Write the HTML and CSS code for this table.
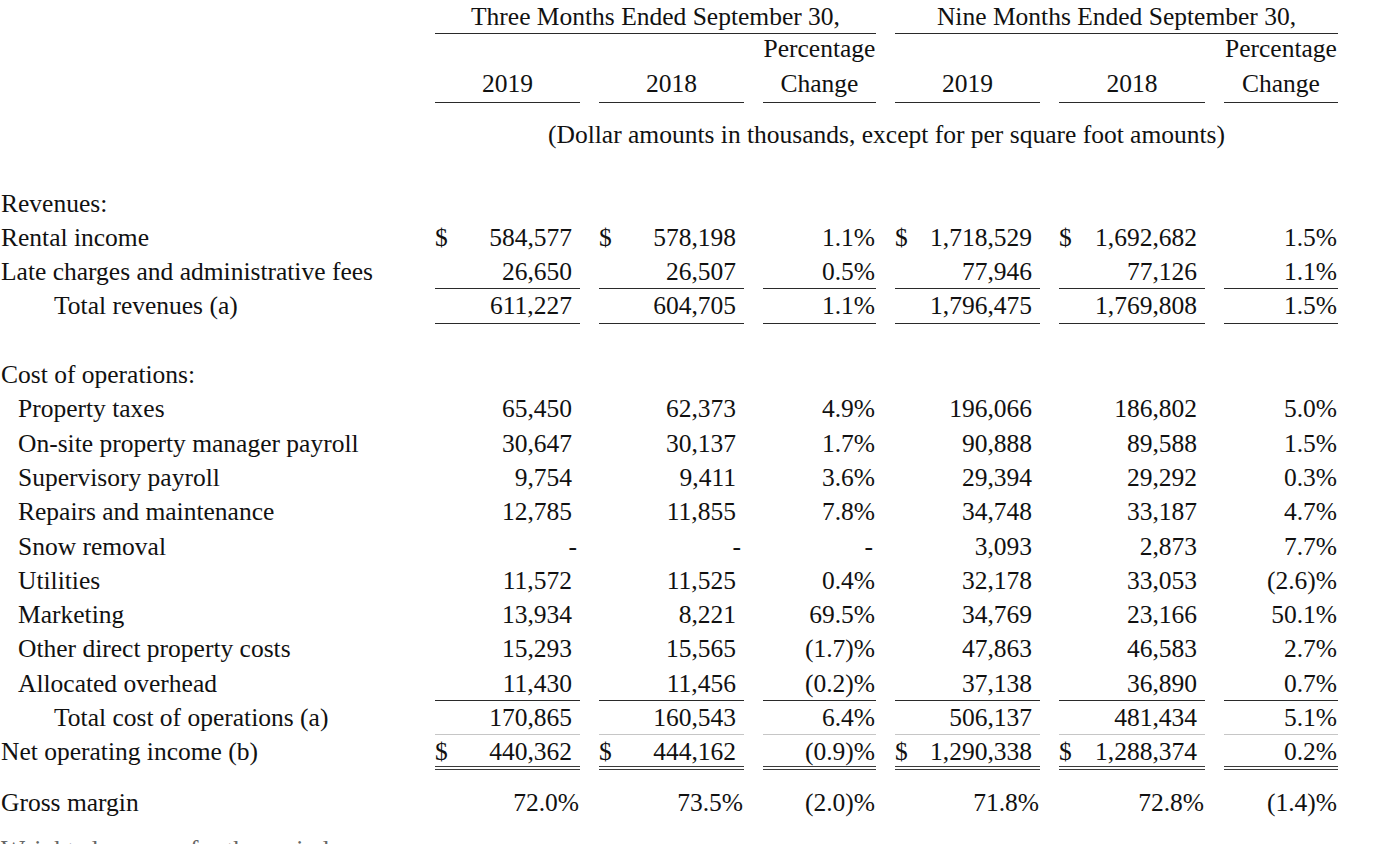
FILE: index.html
```html
<!DOCTYPE html>
<html lang="en">
<head>
<meta charset="utf-8">
<title>Same store operating results</title>
<link rel="stylesheet" href="styles.css">
</head>
<body>
<div class="report">
  <div class="row head-group">
    <div></div>
    <div class="grp">Three Months Ended September 30,</div>
    <div class="grp">Nine Months Ended September 30,</div>
  </div>
  <div class="row head-cols">
    <div></div>
    <div class="hc">2019</div>
    <div class="hc">2018</div>
    <div class="hc">Percentage<br>Change</div>
    <div class="hc">2019</div>
    <div class="hc">2018</div>
    <div class="hc">Percentage<br>Change</div>
  </div>
  <div class="row note">
    <div></div>
    <div class="note-text">(Dollar amounts in thousands, except for per square foot amounts)</div>
  </div>
  <div class="row blank"></div>

  <div class="row"><div class="lbl">Revenues:</div></div>
  <div class="row">
    <div class="lbl">Rental income</div>
    <div class="num"><span>$</span><span>584,577</span></div>
    <div class="num"><span>$</span><span>578,198</span></div>
    <div class="pct">1.1%</div>
    <div class="num"><span>$</span><span>1,718,529</span></div>
    <div class="num"><span>$</span><span>1,692,682</span></div>
    <div class="pct">1.5%</div>
  </div>
  <div class="row">
    <div class="lbl">Late charges and administrative fees</div>
    <div class="num ul"><span></span><span>26,650</span></div>
    <div class="num ul"><span></span><span>26,507</span></div>
    <div class="pct ul">0.5%</div>
    <div class="num ul"><span></span><span>77,946</span></div>
    <div class="num ul"><span></span><span>77,126</span></div>
    <div class="pct ul">1.1%</div>
  </div>
  <div class="row">
    <div class="lbl ind2">Total revenues (a)</div>
    <div class="num ul"><span></span><span>611,227</span></div>
    <div class="num ul"><span></span><span>604,705</span></div>
    <div class="pct ul">1.1%</div>
    <div class="num ul"><span></span><span>1,796,475</span></div>
    <div class="num ul"><span></span><span>1,769,808</span></div>
    <div class="pct ul">1.5%</div>
  </div>
  <div class="row blank"></div>

  <div class="row"><div class="lbl">Cost of operations:</div></div>
  <div class="row">
    <div class="lbl ind1">Property taxes</div>
    <div class="num"><span></span><span>65,450</span></div>
    <div class="num"><span></span><span>62,373</span></div>
    <div class="pct">4.9%</div>
    <div class="num"><span></span><span>196,066</span></div>
    <div class="num"><span></span><span>186,802</span></div>
    <div class="pct">5.0%</div>
  </div>
  <div class="row">
    <div class="lbl ind1">On-site property manager payroll</div>
    <div class="num"><span></span><span>30,647</span></div>
    <div class="num"><span></span><span>30,137</span></div>
    <div class="pct">1.7%</div>
    <div class="num"><span></span><span>90,888</span></div>
    <div class="num"><span></span><span>89,588</span></div>
    <div class="pct">1.5%</div>
  </div>
  <div class="row">
    <div class="lbl ind1">Supervisory payroll</div>
    <div class="num"><span></span><span>9,754</span></div>
    <div class="num"><span></span><span>9,411</span></div>
    <div class="pct">3.6%</div>
    <div class="num"><span></span><span>29,394</span></div>
    <div class="num"><span></span><span>29,292</span></div>
    <div class="pct">0.3%</div>
  </div>
  <div class="row">
    <div class="lbl ind1">Repairs and maintenance</div>
    <div class="num"><span></span><span>12,785</span></div>
    <div class="num"><span></span><span>11,855</span></div>
    <div class="pct">7.8%</div>
    <div class="num"><span></span><span>34,748</span></div>
    <div class="num"><span></span><span>33,187</span></div>
    <div class="pct">4.7%</div>
  </div>
  <div class="row">
    <div class="lbl ind1">Snow removal</div>
    <div class="num dash"><span></span><span>-</span></div>
    <div class="num dash"><span></span><span>-</span></div>
    <div class="pct dash">-</div>
    <div class="num"><span></span><span>3,093</span></div>
    <div class="num"><span></span><span>2,873</span></div>
    <div class="pct">7.7%</div>
  </div>
  <div class="row">
    <div class="lbl ind1">Utilities</div>
    <div class="num"><span></span><span>11,572</span></div>
    <div class="num"><span></span><span>11,525</span></div>
    <div class="pct">0.4%</div>
    <div class="num"><span></span><span>32,178</span></div>
    <div class="num"><span></span><span>33,053</span></div>
    <div class="pct">(2.6)%</div>
  </div>
  <div class="row">
    <div class="lbl ind1">Marketing</div>
    <div class="num"><span></span><span>13,934</span></div>
    <div class="num"><span></span><span>8,221</span></div>
    <div class="pct">69.5%</div>
    <div class="num"><span></span><span>34,769</span></div>
    <div class="num"><span></span><span>23,166</span></div>
    <div class="pct">50.1%</div>
  </div>
  <div class="row">
    <div class="lbl ind1">Other direct property costs</div>
    <div class="num"><span></span><span>15,293</span></div>
    <div class="num"><span></span><span>15,565</span></div>
    <div class="pct">(1.7)%</div>
    <div class="num"><span></span><span>47,863</span></div>
    <div class="num"><span></span><span>46,583</span></div>
    <div class="pct">2.7%</div>
  </div>
  <div class="row">
    <div class="lbl ind1">Allocated overhead</div>
    <div class="num ul"><span></span><span>11,430</span></div>
    <div class="num ul"><span></span><span>11,456</span></div>
    <div class="pct ul">(0.2)%</div>
    <div class="num ul"><span></span><span>37,138</span></div>
    <div class="num ul"><span></span><span>36,890</span></div>
    <div class="pct ul">0.7%</div>
  </div>
  <div class="row">
    <div class="lbl ind2">Total cost of operations (a)</div>
    <div class="num ul-light"><span></span><span>170,865</span></div>
    <div class="num ul-light"><span></span><span>160,543</span></div>
    <div class="pct ul-light">6.4%</div>
    <div class="num ul-light"><span></span><span>506,137</span></div>
    <div class="num ul-light"><span></span><span>481,434</span></div>
    <div class="pct ul-light">5.1%</div>
  </div>
  <div class="row">
    <div class="lbl">Net operating income (b)</div>
    <div class="num ul-double"><span>$</span><span>440,362</span></div>
    <div class="num ul-double"><span>$</span><span>444,162</span></div>
    <div class="pct ul-double">(0.9)%</div>
    <div class="num ul-double"><span>$</span><span>1,290,338</span></div>
    <div class="num ul-double"><span>$</span><span>1,288,374</span></div>
    <div class="pct ul-double">0.2%</div>
  </div>
  <div class="row gross">
    <div class="lbl">Gross margin</div>
    <div class="num margin"><span></span><span>72.0%</span></div>
    <div class="num margin"><span></span><span>73.5%</span></div>
    <div class="pct">(2.0)%</div>
    <div class="num margin"><span></span><span>71.8%</span></div>
    <div class="num margin"><span></span><span>72.8%</span></div>
    <div class="pct">(1.4)%</div>
  </div>
  <div class="row next">
    <div class="lbl">Weighted average for the period:</div>
  </div>
</div>
</body>
</html>
```
FILE: styles.css
```css
html, body {
  margin: 0;
  padding: 0;
  background: #ffffff;
}

body {
  font-family: "Liberation Serif", "Times New Roman", serif;
  font-size: 25.5px;
  color: #111111;
  overflow: hidden;
}

.report {
  width: 1374px;
}

.row {
  display: grid;
  grid-template-columns: 416px 145px 145px 113px 145px 146px 114px;
  column-gap: 19px;
  height: 34.3px;
  line-height: 34.3px;
}

.row > div {
  box-sizing: border-box;
  height: 34.3px;
  white-space: nowrap;
}

/* header */
.head-group {
  height: 34px;
  line-height: 33px;
}
.head-group > div {
  height: 34px;
}
.grp {
  grid-column: span 3;
  text-align: center;
  border-bottom: 1px solid #2a2a2a;
}

.head-cols {
  height: 69px;
}
.head-cols > div {
  height: 69px;
}
.hc {
  display: flex;
  flex-direction: column;
  justify-content: flex-end;
  text-align: center;
  border-bottom: 1px solid #2a2a2a;
  padding-bottom: 1px;
}

.note {
  margin-top: 15px;
}
.note-text {
  grid-column: span 6;
  text-align: center;
}

/* labels */
.lbl {
  padding-left: 1px;
}
.ind1 {
  padding-left: 18px;
}
.ind2 {
  padding-left: 54px;
}

/* values */
.num {
  display: flex;
  justify-content: space-between;
  padding-right: 8px;
}
.num.dash {
  padding-right: 3px;
}
.num.margin {
  padding-right: 1px;
}
.pct {
  text-align: right;
  padding-right: 1px;
}
.pct.dash {
  padding-right: 3px;
}

.ul {
  border-bottom: 1px solid #2a2a2a;
}
.ul-light {
  border-bottom: 1px solid #c6c6c6;
}
.ul-double {
  border-bottom: 4px double #3a3a3a;
}

.gross {
  margin-top: 16px;
}

.next {
  margin-top: 13px;
  color: #666666;
}
```
